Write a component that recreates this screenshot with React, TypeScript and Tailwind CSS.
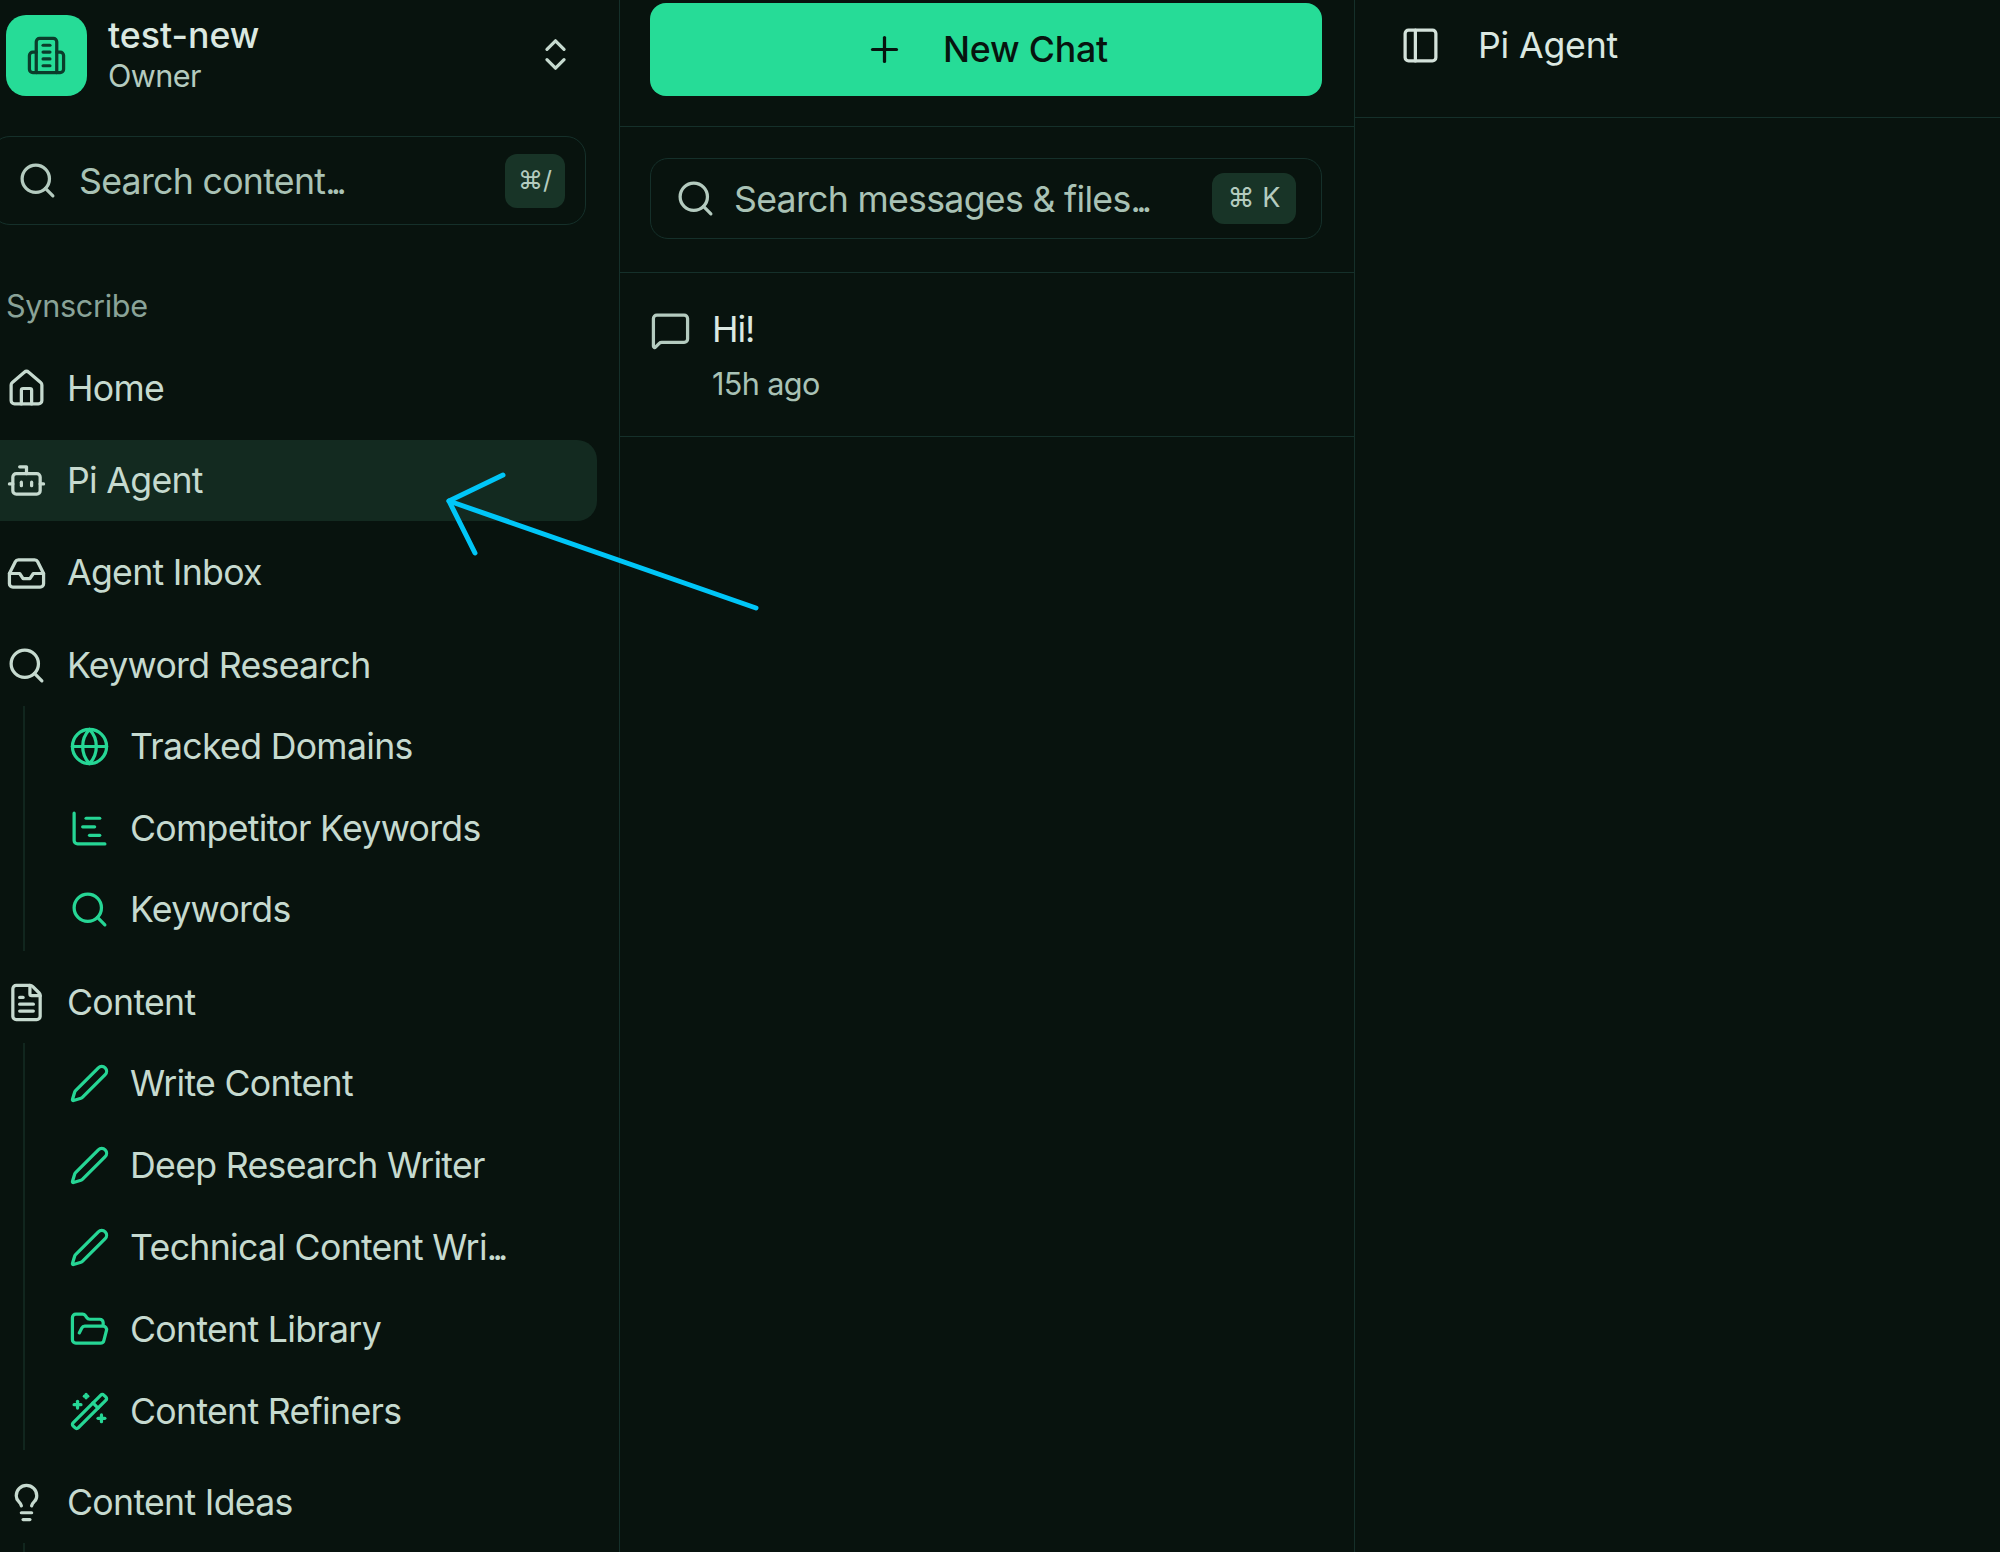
import React from "react";
import {
  Bot, ChartGantt, ChevronsUpDown, FileText, FolderOpen, Globe, House, Inbox, Lightbulb,
  MessageSquare, PanelLeft, Pen, Plus, Search, WandSparkles,
} from "lucide-react";

const SW = 1.9;

function Dots() {
  return <span className="tracking-[-0.13em]">...</span>;
}

function MainRow({ icon: Icon, label, active }: { icon: any; label: string; active?: boolean }) {
  return (
    <div className={`flex h-[81px] w-[617px] -ml-5 items-center gap-[20px] rounded-r-[20px] pl-[26px] text-[35.7px] tracking-[-0.02em] text-[#c6dacf] ${active ? "bg-[#132a20]" : ""}`}>
      <Icon size={41} strokeWidth={SW} className="shrink-0 text-[#c6dacf]" />
      <span>{label}</span>
    </div>
  );
}

function SubRow({ icon: Icon, label, dots }: { icon: any; label: string; dots?: boolean }) {
  return (
    <div className="flex h-[52px] items-center gap-[20px] text-[35.7px] tracking-[-0.02em] text-[#c6dacf]">
      <Icon size={41} strokeWidth={SW} className="shrink-0 text-[#26d695]" />
      <span className="whitespace-nowrap">{label}{dots ? <Dots /> : null}</span>
    </div>
  );
}

function Logo() {
  return (
    <svg width="41" height="41" viewBox="0 0 24 24" fill="none" stroke="#0b3d2b" strokeWidth="1.9" strokeLinecap="round" strokeLinejoin="round">
      <path d="M6 22V4a2 2 0 0 1 2-2h8a2 2 0 0 1 2 2v18Z" />
      <path d="M6 10H4a2 2 0 0 0-2 2v8a2 2 0 0 0 2 2h2" />
      <path d="M18 10h2a2 2 0 0 1 2 2v8a2 2 0 0 1-2 2h-2" />
      <path d="M10 6h4" />
      <path d="M10 10h4" />
      <path d="M10 14h4" />
      <path d="M10 18h4" />
    </svg>
  );
}

export default function App() {
  return (
    <div className="relative flex h-[1552px] w-[2000px] overflow-hidden bg-[#08130e] font-['Inter',sans-serif]">
      {/* Sidebar */}
      <aside className="flex w-[620px] shrink-0 flex-col overflow-hidden border-r border-[#15302a]">
        <div className="ml-[6px] mt-[15px] flex h-[81px] items-center">
          <div className="flex h-[81px] w-[81px] items-center justify-center rounded-[20px] bg-[#26dc97]">
            <Logo />
          </div>
          <div className="ml-[21px] -mt-[3px] flex flex-col">
            <span className="h-[42px] text-[35.7px] font-medium leading-[42px] text-[#dbe8e1]">test-new</span>
            <span className="mt-[1px] text-[30.6px] leading-[38px] tracking-[-0.02em] text-[#b4cbbf]">Owner</span>
          </div>
          <ChevronsUpDown size={41} strokeWidth={SW} className="ml-auto mr-[43px] -mt-[2px] text-[#c6dacf]" />
        </div>

        <div className="-ml-[10px] mt-[40px] flex h-[89px] w-[596px] items-center rounded-[20px] border border-[#15302a] pl-[26px] pr-[20px]">
          <Search size={41} strokeWidth={SW} className="shrink-0 text-[#b4cbbf]" />
          <span className="ml-[21px] mt-[2px] text-[35.7px] tracking-[-0.02em] text-[#a9c2b5]">Search content<Dots /></span>
          <span className="ml-auto flex h-[54px] w-[60px] items-center justify-center rounded-[12px] bg-[#183427] text-[25px] text-[#b4cbbf]">⌘/</span>
        </div>

        <div className="ml-[6px] mt-[61px] h-[40px] text-[30.6px] leading-[40px] tracking-[-0.01em] text-[#8aa398]">Synscribe</div>

        <div className="mt-[22px] flex flex-col gap-[11.3px]">
          <MainRow icon={House} label="Home" />
          <MainRow icon={Bot} label="Pi Agent" active />
          <MainRow icon={Inbox} label="Agent Inbox" />
          <MainRow icon={Search} label="Keyword Research" />
        </div>

        <div className="ml-[23px] flex flex-col gap-[29.5px] border-l-2 border-[#11261e] pb-[15px] pl-[44px] pt-[15px]">
          <SubRow icon={Globe} label="Tracked Domains" />
          <SubRow icon={ChartGantt} label="Competitor Keywords" />
          <SubRow icon={Search} label="Keywords" />
        </div>

        <div className="mt-[11px]">
          <MainRow icon={FileText} label="Content" />
        </div>

        <div className="ml-[23px] flex flex-col gap-[30px] border-l-2 border-[#11261e] pb-[12px] pl-[44px] pt-[15px]">
          <SubRow icon={Pen} label="Write Content" />
          <SubRow icon={Pen} label="Deep Research Writer" />
          <SubRow icon={Pen} label="Technical Content Wri" dots />
          <SubRow icon={FolderOpen} label="Content Library" />
          <SubRow icon={WandSparkles} label="Content Refiners" />
        </div>

        <div className="mt-[12px]">
          <MainRow icon={Lightbulb} label="Content Ideas" />
        </div>

        <div className="ml-[23px] flex-1 border-l-2 border-[#11261e]" />
      </aside>

      {/* Conversation list */}
      <section className="flex w-[735px] shrink-0 flex-col border-r border-[#15302a]">
        <div className="h-[127px] border-b border-[#15302a] pl-[30px] pr-[32px] pt-[3px]">
          <div className="flex h-[93px] items-center justify-center gap-[38px] rounded-[16px] bg-[#26dc97] text-[35.7px] font-medium tracking-[-0.005em] text-[#07140f]">
            <Plus size={41} strokeWidth={SW} />
            <span>New Chat</span>
          </div>
        </div>
        <div className="h-[146px] border-b border-[#15302a] pl-[30px] pr-[32px] pt-[31px]">
          <div className="flex h-[81px] items-center rounded-[18px] border border-[#15302a] pl-[24px] pr-[25px]">
            <Search size={41} strokeWidth={SW} className="shrink-0 text-[#b4cbbf]" />
            <span className="ml-[18px] mt-[2px] text-[35.7px] tracking-[-0.02em] text-[#a9c2b5]">Search messages &amp; files<Dots /></span>
            <span className="ml-auto flex h-[51px] w-[84px] items-center justify-center rounded-[12px] bg-[#183427] text-[27px] text-[#b4cbbf]">⌘ K</span>
          </div>
        </div>
        <div className="flex h-[164px] gap-[21px] border-b border-[#15302a] pl-[30px] pt-[34px]">
          <MessageSquare size={41} strokeWidth={SW} className="mt-[3px] shrink-0 text-[#b4cbbf]" />
          <div className="flex flex-col">
            <span className="text-[35.7px] leading-[44px] tracking-[-0.03em] text-[#dbe8e1]">Hi!</span>
            <span className="mt-[11px] text-[30.6px] leading-[44px] tracking-[-0.02em] text-[#a9c2b5]">15h ago</span>
          </div>
        </div>
      </section>

      {/* Main panel */}
      <main className="flex flex-1 flex-col">
        <div className="flex h-[118px] items-start gap-[37px] border-b border-[#15302a] pl-[45px] pt-[25px]">
          <PanelLeft size={41} strokeWidth={SW} className="shrink-0 text-[#d3e2da]" />
          <span className="text-[35.7px] leading-[41px] tracking-[-0.005em] text-[#dbe8e1]">Pi Agent</span>
        </div>
      </main>

      {/* Annotation arrow */}
      <svg className="pointer-events-none absolute left-[440px] top-[465px]" width="330" height="155" viewBox="440 465 330 155" fill="none" stroke="#00c6f8" strokeWidth="5" strokeLinecap="round" strokeLinejoin="round">
        <path d="M756 608 449 501" />
        <path d="M503 475 449 501 475 553" />
      </svg>
    </div>
  );
}
